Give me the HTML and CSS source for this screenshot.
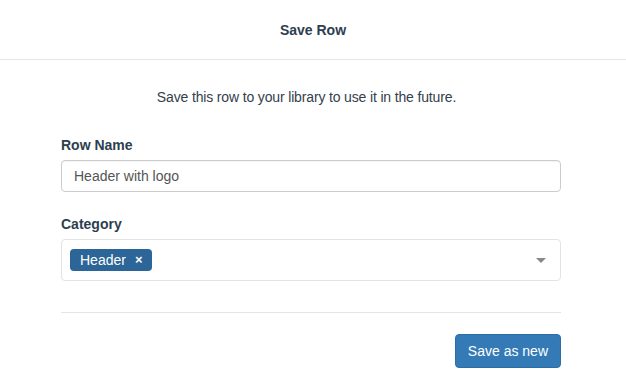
FILE: index.html
```html
<html>
<head>
  <meta charset="UTF-8">
  <title>Save Row</title>
  <link rel="stylesheet" href="styles.css">
</head>
<body>
  <div class="modal">
    <div class="modal-header">
      <h4 class="modal-title">Save Row</h4>
    </div>
    <div class="modal-body">
      <p class="intro">Save this row to your library to use it in the future.</p>

      <div class="form-group">
        <label class="control-label">Row Name</label>
        <input class="form-control" type="text" value="Header with logo">
      </div>

      <div class="form-group">
        <label class="control-label">Category</label>
        <div class="select">
          <span class="tag">Header <span class="tag-remove">&times;</span></span>
          <span class="caret"></span>
        </div>
      </div>

      <div class="modal-footer">
        <button class="btn btn-primary">Save as new</button>
      </div>
    </div>
  </div>
</body>
</html>
```

FILE: styles.css
```css
html, body {
  margin: 0;
  background: #fff;
  font-family: "Liberation Sans", Arial, sans-serif;
  font-size: 14px;
  line-height: 20px;
  color: #333;
}

.modal-header {
  height: 59px;
  border-bottom: 1px solid #e5e5e5;
  display: flex;
  align-items: center;
  justify-content: center;
}
.modal-title {
  margin: 0;
  font-size: 14px;
  font-weight: bold;
  color: #2c3e50;
  padding-top: 1px;
}

.modal-body {
  width: 500px;
  margin-left: 61px;
  padding-top: 27px;
}

.intro {
  margin: 0 0 28px;
  padding-right: 9px;
  text-align: center;
  color: #34404c;
  letter-spacing: -0.15px;
}

.form-group {
  margin-bottom: 22px;
}
.control-label {
  display: block;
  font-weight: bold;
  color: #2c3e50;
  margin-bottom: 5px;
}

.form-control {
  display: block;
  box-sizing: border-box;
  width: 100%;
  height: 32px;
  padding: 0 12px;
  border: 1px solid #ccc;
  border-radius: 4px;
  font-family: inherit;
  font-size: 14px;
  color: #555;
  box-shadow: inset 0 1px 1px rgba(0, 0, 0, .05);
}

.select {
  box-sizing: border-box;
  height: 42px;
  border: 1px solid #e3e3e3;
  border-radius: 4px;
  display: flex;
  align-items: center;
  padding: 0 14px 0 8px;
}
.tag {
  display: inline-flex;
  align-items: center;
  height: 22px;
  padding: 0 9px 0 10px;
  background: #2c6597;
  color: #fff;
  border-radius: 4px;
}
.tag-remove {
  font-weight: bold;
  font-size: 13px;
  margin-left: 9px;
}
.caret {
  margin-left: auto;
  width: 0;
  height: 0;
  border-left: 5px solid transparent;
  border-right: 5px solid transparent;
  border-top: 5px solid #888;
}

.modal-footer {
  border-top: 1px solid #e5e5e5;
  margin-top: 31px;
  padding-top: 21px;
  display: flex;
  justify-content: flex-end;
}
.btn {
  height: 34px;
  padding: 0 12px;
  border: 1px solid #2e6da4;
  border-radius: 4px;
  font-family: inherit;
  font-size: 14px;
}
.btn-primary {
  background: #337ab7;
  color: #fff;
}
```
